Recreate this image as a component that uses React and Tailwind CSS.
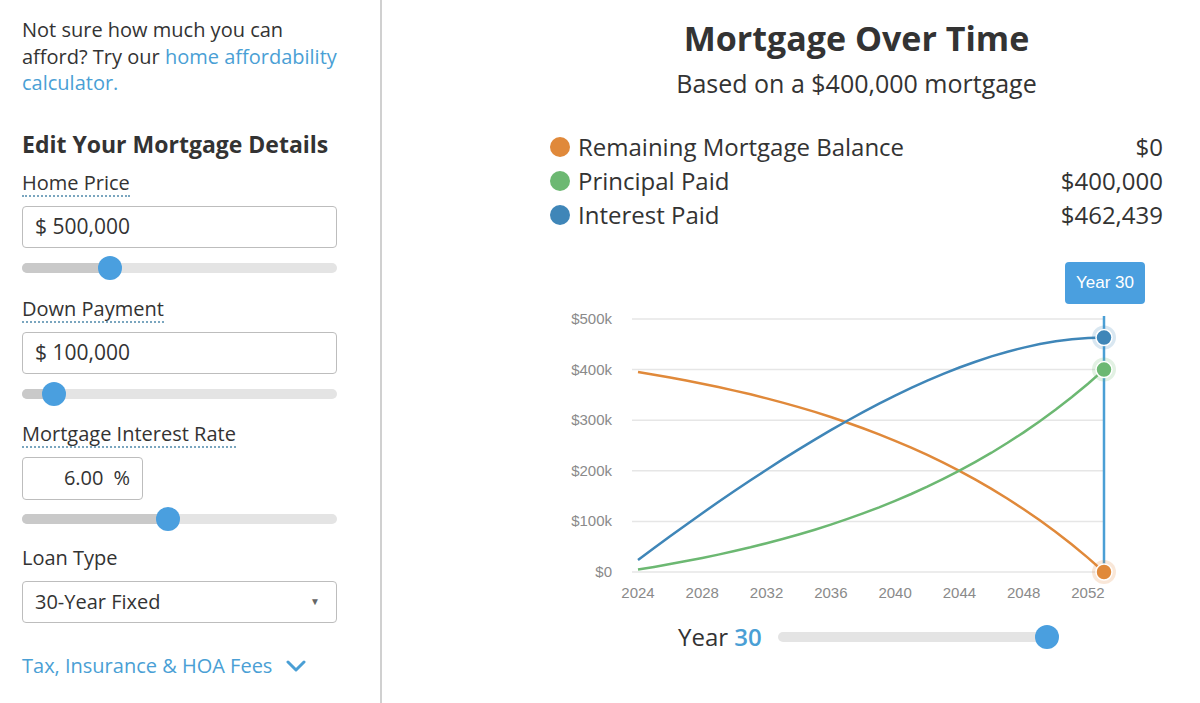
import React from 'react';

const FONT = { fontFamily: '"Open Sans", "Liberation Sans", sans-serif' };

// amortization for the chart
const buildData = () => {
  const P = 400000;
  const r = 0.06 / 12;
  const n = 360;
  const pmt = (P * r) / (1 - Math.pow(1 + r, -n));
  const rows = [];
  for (let y = 1; y <= 30; y++) {
    const m = y * 12;
    const bal = y === 30 ? 0 : P * Math.pow(1 + r, m) - (pmt * (Math.pow(1 + r, m) - 1)) / r;
    const principal = P - bal;
    const interest = pmt * m - principal;
    rows.push({ y, bal, principal, interest });
  }
  return rows;
};

const data = buildData();
const px = (year) => 88 + (year - 1) * 16.07;
const py = (v) => 322 - v * 0.000506;
const line = (key) => data.map((d, i) => `${i ? 'L' : 'M'}${px(d.y).toFixed(1)} ${py(d[key]).toFixed(1)}`).join(' ');

const Slider = ({ pos }) => (
  <div className="relative h-6 w-[315px] flex items-center">
    <div className="h-[10px] w-full rounded-full bg-[#e4e4e4]" />
    <div className="absolute left-0 h-[10px] rounded-full bg-[#c9c9c9]" style={{ width: pos }} />
    <div className="absolute h-6 w-6 rounded-full bg-[#4a9fdf]" style={{ left: pos - 12 }} />
  </div>
);

const Label = ({ children, dotted = true, mt = 'mt-[17px]' }) => (
  <div className={mt + ' mb-[9px]'}>
    <span
      className={
        'inline-block text-[20px] leading-[24px] text-[#333] border-b-2 border-dotted ' +
        (dotted ? 'border-[#7aa6bf]' : 'border-transparent')
      }
    >
      {children}
    </span>
  </div>
);

const Field = ({ children }) => (
  <div className="h-[42px] w-[315px] rounded-[4px] border border-[#bdbdbd] flex items-center pl-[12px] text-[21px] text-[#333]">
    {children}
  </div>
);

const Sidebar = () => (
  <div className="w-[382px] shrink-0 border-r-2 border-[#d0d0d0] pl-[22px] pt-[17px] h-[703px]">
    <p className="text-[20px] leading-[26.5px] text-[#333]">
      Not sure how much you can
      <br />
      afford? Try our <span className="text-[#4a9fd5]">home affordability</span>
      <br />
      <span className="text-[#4a9fd5]">calculator.</span>
    </p>
    <h2 className="mt-[32px] text-[23px] leading-[30px] font-bold text-[#333]">Edit Your Mortgage Details</h2>
    <Label mt="mt-[12px]">Home Price</Label>
    <Field>$ 500,000</Field>
    <div className="mt-[8px]">
      <Slider pos={88} />
    </div>
    <Label>Down Payment</Label>
    <Field>$ 100,000</Field>
    <div className="mt-[8px]">
      <Slider pos={32} />
    </div>
    <Label mt="mt-[16px]">Mortgage Interest Rate</Label>
    <div className="h-[43px] w-[121px] rounded-[4px] border border-[#bdbdbd] flex items-center justify-end pr-[12px] text-[20px] text-[#333]">
      <span>6.00</span>
      <span className="ml-[10px]">%</span>
    </div>
    <div className="mt-[7px]">
      <Slider pos={146} />
    </div>
    <Label dotted={false} mt="mt-[15px]">Loan Type</Label>
    <div className="h-[42px] w-[315px] rounded-[4px] border border-[#bdbdbd] flex items-center justify-between pl-[12px] pr-[16px] text-[20px] text-[#333]">
      <span>30-Year Fixed</span>
      <span className="text-[10px] text-[#666]">▼</span>
    </div>
    <div className="mt-[28px] flex items-center gap-[14px] text-[20px] text-[#4a9fd5]">
      <span>Tax, Insurance &amp; HOA Fees</span>
      <svg width="20" height="12" viewBox="0 0 20 12" fill="none">
        <path d="M2 2 L10 10 L18 2" stroke="#4a9fd5" strokeWidth="3" strokeLinecap="round" strokeLinejoin="round" />
      </svg>
    </div>
  </div>
);

const legend = [
  { color: '#e0893a', label: 'Remaining Mortgage Balance', value: '$0' },
  { color: '#6cb872', label: 'Principal Paid', value: '$400,000' },
  { color: '#3f86b8', label: 'Interest Paid', value: '$462,439' },
];

const Chart = () => {
  const grid = [0, 100000, 200000, 300000, 400000, 500000];
  const years = [2024, 2028, 2032, 2036, 2040, 2044, 2048, 2052];
  const last = data[29];
  return (
    <div className="relative mt-[18px] h-[355px] w-[613px]">
      <svg width="613" height="355" className="block" style={{ fontFamily: '"Liberation Sans", Arial, sans-serif' }}>
        {grid.map((g) => (
          <g key={g}>
            <line x1="82" x2="555" y1={py(g)} y2={py(g)} stroke="#e6e6e6" strokeWidth="1.5" />
            <text x="62" y={py(g) + 5} textAnchor="end" fontSize="15" fill="#8a8a8a">
              {g === 0 ? '$0' : `$${g / 1000}k`}
            </text>
          </g>
        ))}
        {years.map((yr, i) => (
          <text key={yr} x={88 + i * 64.28} y="348" textAnchor="middle" fontSize="15" fill="#8a8a8a">
            {yr}
          </text>
        ))}
        <line x1="554" x2="554" y1="66" y2="322" stroke="#4a9fd5" strokeWidth="2.5" />
        <path d={line('bal')} fill="none" stroke="#e0893a" strokeWidth="2.5" />
        <path d={line('principal')} fill="none" stroke="#6cb872" strokeWidth="2.5" />
        <path d={line('interest')} fill="none" stroke="#3f86b8" strokeWidth="2.5" />
        {[
          ['interest', '#3f86b8'],
          ['principal', '#6cb872'],
          ['bal', '#e0893a'],
        ].map(([k, c]) => (
          <g key={k}>
            <circle cx="554" cy={py(last[k])} r="12" fill={c} opacity="0.2" />
            <circle cx="554" cy={py(last[k])} r="8" fill={c} stroke="#fff" strokeWidth="1.5" />
          </g>
        ))}
      </svg>
      <div
        className="absolute left-[515px] top-[12px] h-[42px] w-[80px] rounded-[4px] bg-[#4a9fdf] flex items-center justify-center text-[17px] text-white"
        style={{ fontFamily: '"Liberation Sans", Arial, sans-serif' }}
      >
        Year 30
      </div>
    </div>
  );
};

const Main = () => (
  <div className="flex-1 pl-[168px] pt-[16px]">
    <div className="w-[613px]">
      <h1 className="text-center text-[34px] leading-[44px] font-bold text-[#333]">Mortgage Over Time</h1>
      <p className="mt-[9px] text-center text-[25px] leading-[28px] text-[#333]">Based on a $400,000 mortgage</p>
      <div className="mt-[33px]">
        {legend.map((l) => (
          <div key={l.label} className="flex items-center h-[34px] text-[24px] text-[#333]">
            <span className="h-5 w-5 rounded-full mr-[8px]" style={{ background: l.color }} />
            <span className="flex-1">{l.label}</span>
            <span>{l.value}</span>
          </div>
        ))}
      </div>
      <Chart />
      <div className="mt-[16px] ml-[128px] flex items-center h-[32px]">
        <span className="text-[24px] text-[#333]">
          Year <span className="text-[#4a9fd5] font-semibold">30</span>
        </span>
        <div className="relative ml-[16px] w-[279px] h-6 flex items-center">
          <div className="h-[10px] w-full rounded-full bg-[#e4e4e4]" />
          <div className="absolute left-[257px] h-6 w-6 rounded-full bg-[#4a9fdf]" />
        </div>
      </div>
    </div>
  </div>
);

export default function App() {
  return (
    <div className="flex w-[1200px] h-[703px] bg-white overflow-hidden" style={FONT}>
      <Sidebar />
      <Main />
    </div>
  );
}
